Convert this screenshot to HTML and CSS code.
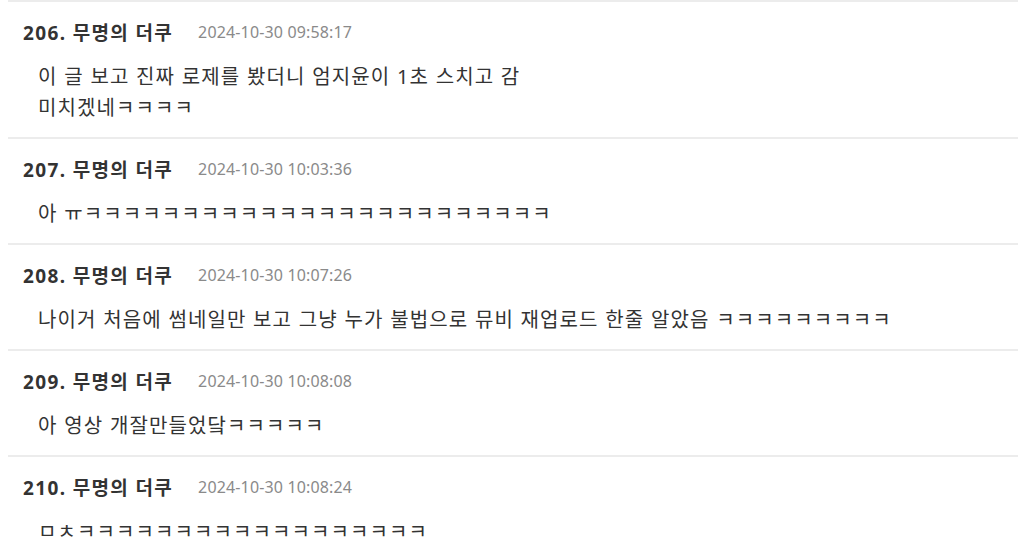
FILE: index.html
```html
<!DOCTYPE html>
<html lang="ko">

<head>
    <meta charset="UTF-8">
    <meta name="viewport" content="width=device-width, initial-scale=1.0">
    <title>댓글</title>
    <link rel="stylesheet" href="styles.css">
</head>

<body>
    <ul class="comment-list">
        <li class="comment">
            <div class="comment-head">
                <span class="comment-name">206. 무명의 더쿠</span>
                <span class="comment-date">2024-10-30 09:58:17</span>
            </div>
            <div class="comment-body">이 글 보고 진짜 로제를 봤더니 엄지윤이 1초 스치고 감<br>미치겠네ㅋㅋㅋㅋ</div>
        </li>
        <li class="comment">
            <div class="comment-head">
                <span class="comment-name">207. 무명의 더쿠</span>
                <span class="comment-date">2024-10-30 10:03:36</span>
            </div>
            <div class="comment-body">아 ㅠㅋㅋㅋㅋㅋㅋㅋㅋㅋㅋㅋㅋㅋㅋㅋㅋㅋㅋㅋㅋㅋㅋㅋㅋ</div>
        </li>
        <li class="comment">
            <div class="comment-head">
                <span class="comment-name">208. 무명의 더쿠</span>
                <span class="comment-date">2024-10-30 10:07:26</span>
            </div>
            <div class="comment-body">나이거 처음에 썸네일만 보고 그냥 누가 불법으로 뮤비 재업로드 한줄 알았음 ㅋㅋㅋㅋㅋㅋㅋㅋㅋ</div>
        </li>
        <li class="comment">
            <div class="comment-head">
                <span class="comment-name">209. 무명의 더쿠</span>
                <span class="comment-date">2024-10-30 10:08:08</span>
            </div>
            <div class="comment-body">아 영상 개잘만들었닼ㅋㅋㅋㅋㅋ</div>
        </li>
        <li class="comment">
            <div class="comment-head">
                <span class="comment-name">210. 무명의 더쿠</span>
                <span class="comment-date">2024-10-30 10:08:24</span>
            </div>
            <div class="comment-body">ㅁㅊㅋㅋㅋㅋㅋㅋㅋㅋㅋㅋㅋㅋㅋㅋㅋㅋㅋㅋ</div>
        </li>
    </ul>
</body>

</html>
```

FILE: styles.css
```css
body {
    margin: 0 0 0 8px;
    background-color: #fff;
    font-family: "Noto Sans", "Noto Sans CJK KR", sans-serif;
    color: #333;
}

.comment-list {
    list-style: none;
    margin: 0;
    padding: 0;
}

.comment {
    border-top: 2px solid #ececec;
    padding: 16px 0 14px 15px;
}

.comment-head {
    display: flex;
    align-items: center;
    height: 28px;
}

.comment-name {
    font-size: 19px;
    font-weight: bold;
    color: #333;
    letter-spacing: 1.35px;
}

.comment-date {
    margin-left: 25px;
    font-size: 16px;
    letter-spacing: 0.15px;
    color: #8a8a8a;
}

.comment-body {
    margin-top: 15px;
    padding-left: 15px;
    font-size: 20px;
    line-height: 31px;
    letter-spacing: 1.1px;
    word-spacing: 0.4px;
    color: #333;
}
```
